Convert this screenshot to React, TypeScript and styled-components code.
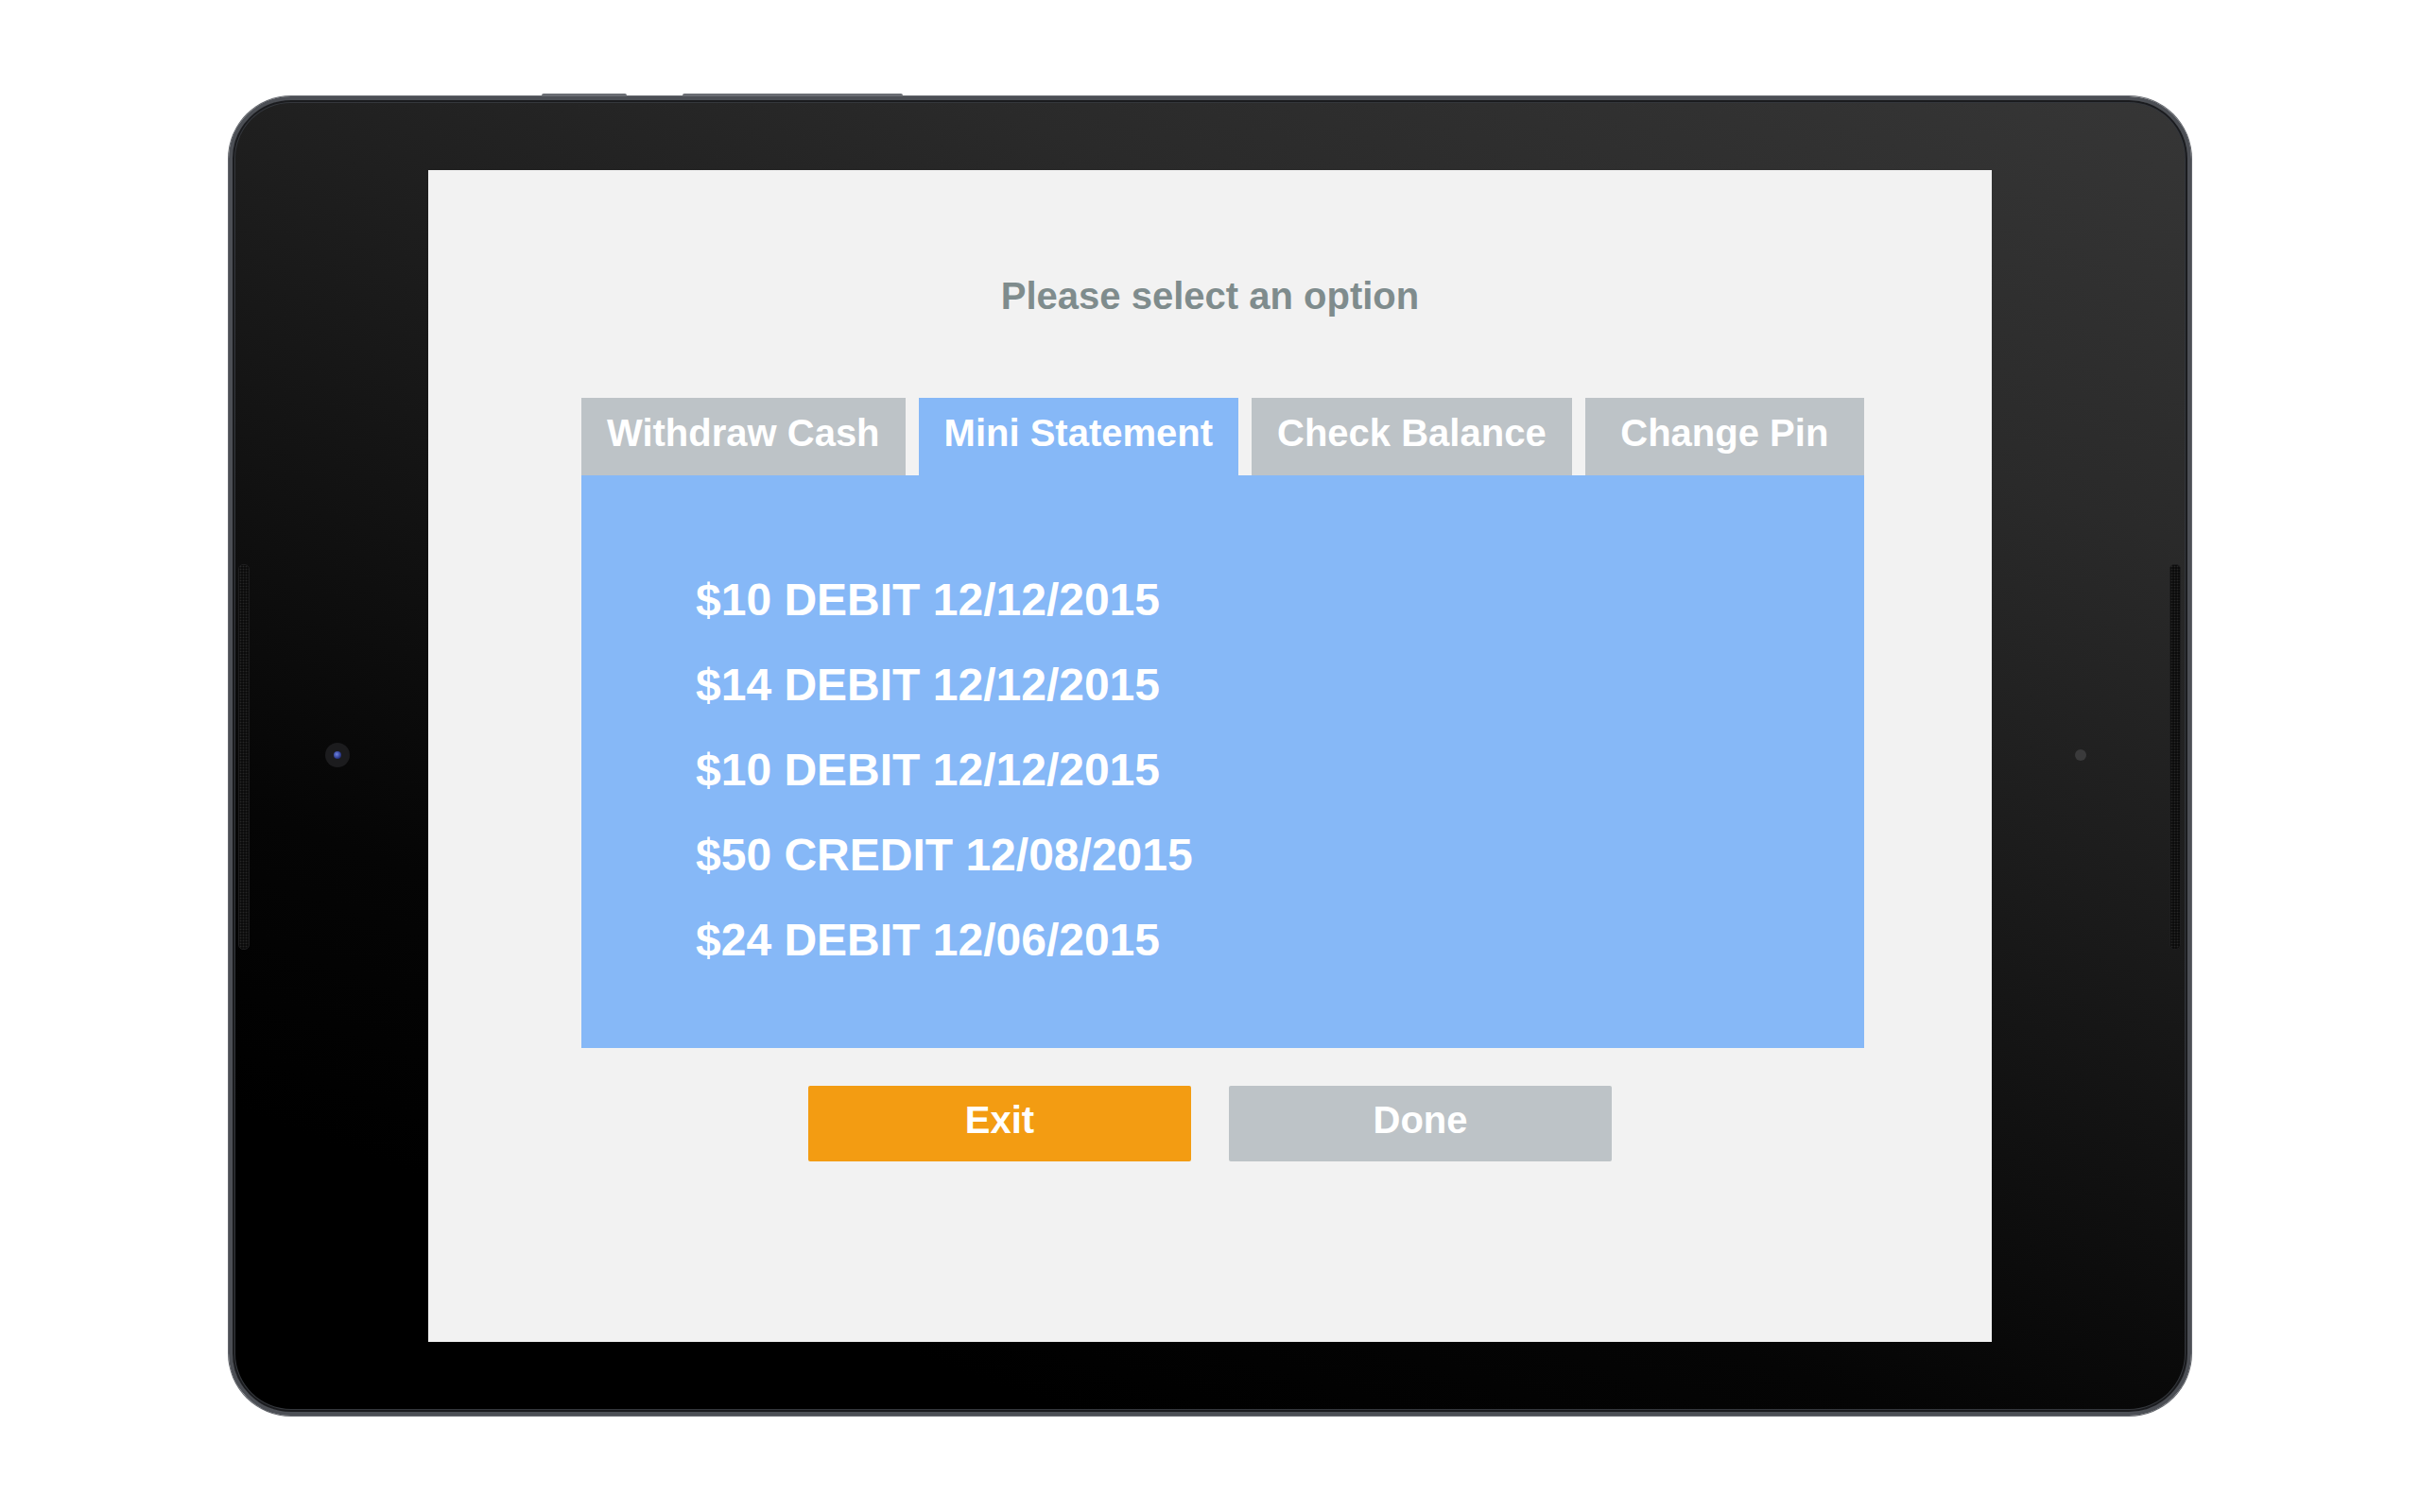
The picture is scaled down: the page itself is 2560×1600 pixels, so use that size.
import React from "react";
import styled, { createGlobalStyle } from "styled-components";

const GlobalStyle = createGlobalStyle`
  html, body {
    margin: 0;
    padding: 0;
    background: #ffffff;
  }
  #root {
    min-height: 100vh;
    display: flex;
    align-items: center;
    justify-content: center;
  }
  * { box-sizing: border-box; }
`;

const Tablet = styled.div`
  position: relative;
  width: 2076px;
  height: 1396px;
  border-radius: 66px;
  border: 4px solid #4c4f55;
  background: linear-gradient(200deg, #363636 0%, #2a2a2a 22%, #141414 50%, #050505 70%, #000 85%);
  box-shadow: inset 0 0 0 2px #1a1b1e, inset 0 0 0 3px #34373c, 0 0 0 1px #64676d;
  display: flex;
  align-items: center;
  justify-content: center;
`;

const SideButton = styled.div<{ $left: number; $width: number }>`
  position: absolute;
  top: -7px;
  left: ${(p) => p.$left}px;
  width: ${(p) => p.$width}px;
  height: 3px;
  border-radius: 2px 2px 0 0;
  background: #6a6d73;
`;

const Grille = styled.div<{ $side: "left" | "right" }>`
  position: absolute;
  top: 491px;
  ${(p) => (p.$side === "left" ? "left: 6px;" : "right: 7px;")}
  width: 12px;
  height: 408px;
  border-radius: 5px;
  background-color: #0c0c0c;
  border: 1px solid #1e1e1f;
  background-image: radial-gradient(circle, #262626 0.8px, transparent 1.1px);
  background-size: 3px 3px;
`;

const Camera = styled.div`
  position: absolute;
  left: 98px;
  top: 680px;
  width: 26px;
  height: 26px;
  border-radius: 50%;
  background: #1c1c1e;
  display: flex;
  align-items: center;
  justify-content: center;
`;

const Lens = styled.div`
  width: 8px;
  height: 8px;
  border-radius: 50%;
  background: radial-gradient(circle at 40% 40%, #6f84e0 0%, #2c3a8c 60%, #10163a 100%);
`;

const Sensor = styled.div`
  position: absolute;
  right: 107px;
  top: 687px;
  width: 12px;
  height: 12px;
  border-radius: 50%;
  background: #3a3a3b;
`;

const Screen = styled.div`
  width: 1654px;
  height: 1240px;
  background: #f2f2f2;
  display: flex;
  flex-direction: column;
  font-family: "Liberation Sans", Arial, Helvetica, sans-serif;
  font-weight: 700;
  padding-top: 109px;
`;

const Title = styled.h1`
  margin: 0 0 84px;
  align-self: center;
  font-size: 40px;
  line-height: 48px;
  font-weight: 700;
  color: #7f8c8d;
`;

const TabSection = styled.div`
  margin-left: 162px;
  width: 1357px;
  display: flex;
  flex-direction: column;
`;

const TabBar = styled.div`
  display: flex;
  gap: 14px;
`;

const Tab = styled.div<{ $active?: boolean; $fill?: boolean }>`
  height: 82px;
  padding: 0 27px 8px;
  line-height: 74px;
  font-size: 40px;
  color: #ffffff;
  text-align: center;
  white-space: nowrap;
  background: ${(p) => (p.$active ? "#86b8f7" : "#bdc3c7")};
  flex: ${(p) => (p.$fill ? "1 1 auto" : "0 0 auto")};
`;

const Panel = styled.div`
  background: #86b8f7;
  padding: 87px 0 69px 121px;
`;

const StatementLine = styled.div`
  font-size: 48px;
  line-height: 90px;
  color: #ffffff;
  white-space: nowrap;
`;

const ButtonRow = styled.div`
  margin-top: 40px;
  display: flex;
  justify-content: center;
  gap: 40px;
`;

const ActionButton = styled.button<{ $variant: "primary" | "muted" }>`
  width: 405px;
  height: 80px;
  border: none;
  border-radius: 2px;
  padding: 0 0 8px;
  line-height: 72px;
  font-family: inherit;
  font-weight: 700;
  font-size: 40px;
  color: #ffffff;
  background: ${(p) => (p.$variant === "primary" ? "#f39c12" : "#bdc3c7")};
  cursor: pointer;
`;

const tabs = ["Withdraw Cash", "Mini Statement", "Check Balance", "Change Pin"];

const statements = [
  "$10 DEBIT 12/12/2015",
  "$14 DEBIT 12/12/2015",
  "$10 DEBIT 12/12/2015",
  "$50 CREDIT 12/08/2015",
  "$24 DEBIT 12/06/2015",
];

export default function App() {
  return (
    <>
      <GlobalStyle />
      <Tablet>
        <SideButton $left={327} $width={90} />
        <SideButton $left={476} $width={233} />
        <Grille $side="left" />
        <Grille $side="right" />
        <Camera>
          <Lens />
        </Camera>
        <Sensor />
        <Screen>
          <Title>Please select an option</Title>
          <TabSection>
            <TabBar>
              {tabs.map((t, i) => (
                <Tab key={t} $active={i === 1} $fill={i === tabs.length - 1}>
                  {t}
                </Tab>
              ))}
            </TabBar>
            <Panel>
              {statements.map((s, i) => (
                <StatementLine key={i}>{s}</StatementLine>
              ))}
            </Panel>
          </TabSection>
          <ButtonRow>
            <ActionButton $variant="primary">Exit</ActionButton>
            <ActionButton $variant="muted">Done</ActionButton>
          </ButtonRow>
        </Screen>
      </Tablet>
    </>
  );
}
